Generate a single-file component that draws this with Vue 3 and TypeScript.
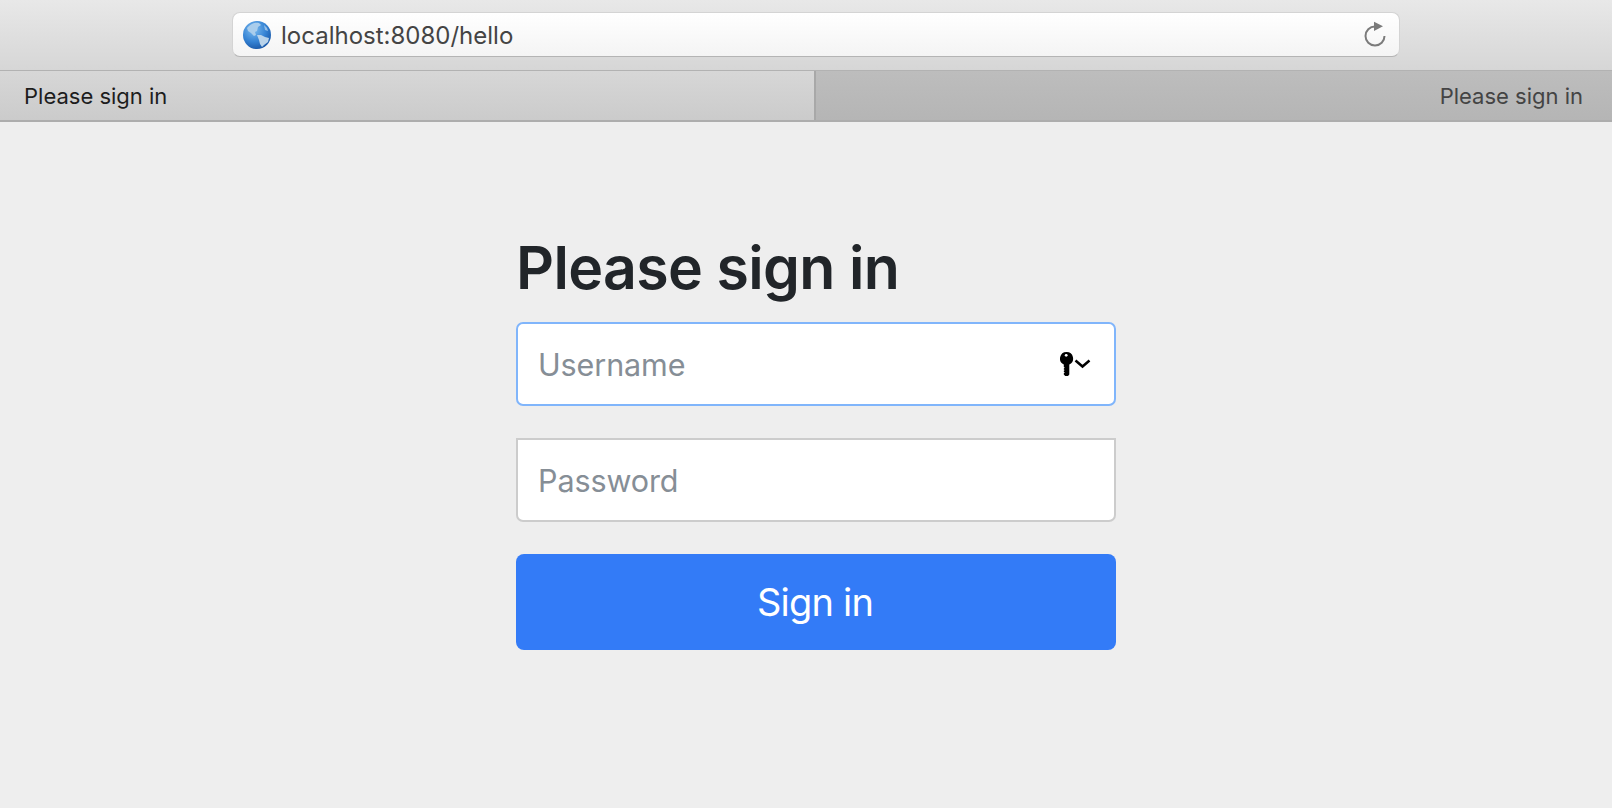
<template>
  <div class="window">
    <header class="toolbar">
      <div class="address">
        <svg class="globe" width="30" height="30" viewBox="0 0 30 30">
          <defs>
            <radialGradient id="sea" cx="0.38" cy="0.3" r="0.8">
              <stop offset="0" stop-color="#7dbcf0" />
              <stop offset="0.55" stop-color="#3583d4" />
              <stop offset="1" stop-color="#154f9e" />
            </radialGradient>
          </defs>
          <circle cx="15" cy="15" r="14" fill="url(#sea)" />
          <path d="M7 6c3-3 7-4 10-3l2 2-3 2-1 4-2 1 1 3-2 1-3-3-3-2-1-3z" fill="#a9cdec" />
          <path d="M15 15l4 0 4 2 4 1-1 4-4 3-2 2-2-3-1-4z" fill="#b9d3ea" />
          <path d="M22 5l3 3 1 3-3-1z" fill="#94bfe8" />
        </svg>
        <span class="url">localhost:8080/hello</span>
        <svg class="reload" width="26" height="28" viewBox="0 0 26 28">
          <path d="M13 5.500a9.500 9.500 0 1 0 9.500 9.500" fill="none" stroke="#7b7b7b" stroke-width="2" />
          <path d="M12 .7l9 4.600-9 4.700z" fill="#7b7b7b" />
        </svg>
      </div>
    </header>
    <nav class="tabs">
      <div class="tab tab-active">{{ title }}</div>
      <div class="tab tab-idle">{{ title }}</div>
    </nav>
    <main class="page">
      <form class="signin" @submit.prevent>
        <h2 class="heading">{{ title }}</h2>
        <div class="field field-focus">
          <input class="control" type="text" placeholder="Username" />
          <svg class="keychain" width="32" height="26" viewBox="0 0 32 26">
            <path d="M6.500 1a6.500 6.500 0 0 1 2.800 12.400V23.500L8 25H5.200l-1.400-1.500v-1.300l1-.7-1-.7v-1l1-.7-1-.7v-1l1-.7-1-.7v-2.600A6.500 6.500 0 0 1 6.500 1z" fill="#000" />
            <circle cx="6.200" cy="4.300" r="1.400" fill="#fff" />
            <path d="M15.500 9.500l7 6 7-6" fill="none" stroke="#000" stroke-width="2.500" />
          </svg>
        </div>
        <div class="field field-stacked">
          <input class="control" type="password" placeholder="Password" />
        </div>
        <button class="submit" type="submit">Sign in</button>
      </form>
    </main>
  </div>
</template>

<script setup lang="ts">
const title = 'Please sign in'
</script>

<style>
html,
body {
  margin: 0;
  background: #eeeeee;
}
</style>

<style scoped>
.window {
  height: 808px;
  display: flex;
  flex-direction: column;
  overflow: hidden;
  font-family: Inter, 'Liberation Sans', sans-serif;
}
.toolbar {
  height: 71px;
  box-sizing: border-box;
  padding: 12px 212px 0 232px;
  background: linear-gradient(#e8e8e8, #d6d6d6);
  border-bottom: 1px solid #b2b2b2;
}
.address {
  height: 45px;
  box-sizing: border-box;
  display: flex;
  align-items: center;
  padding: 0 11px 0 10px;
  background: linear-gradient(#ffffff, #f4f4f4);
  border: 1px solid #d4d4d4;
  border-bottom-color: #b4b4b4;
  border-radius: 8px;
}
.globe {
  flex: none;
  margin-left: -1px;
}
.url {
  margin-left: 9px;
  padding-top: 1px;
  font-size: 24px;
  color: #444444;
}
.reload {
  flex: none;
  margin-left: auto;
}
.tabs {
  height: 51px;
  display: grid;
  grid-template-columns: 814px 1fr;
  box-sizing: border-box;
  border-bottom: 2px solid #adadad;
  font-size: 22px;
}
.tab {
  display: flex;
  align-items: center;
  padding: 1px 29px 0 24px;
}
.tab-active {
  background: linear-gradient(#d7d7d7, #cbcbcb);
  color: #1d1d1d;
}
.tab-idle {
  justify-content: flex-end;
  background: linear-gradient(#bdbdbd, #b5b5b5);
  border-left: 2px solid #a8a8a8;
  color: #444444;
}
.page {
  flex: 1;
  background: #eeeeee;
}
.signin {
  width: 600px;
  margin-left: 516px;
  padding-top: 112px;
}
.heading {
  margin: 0 0 21px;
  font-size: 59px;
  line-height: 67px;
  font-weight: 600;
  letter-spacing: -0.65px;
  color: #212529;
}
.field {
  height: 83.500px;
  box-sizing: border-box;
  display: flex;
  align-items: center;
  margin-bottom: 32px;
  padding: 0 22px 0 20px;
  background: #ffffff;
  border: 2px solid #cccccc;
  border-radius: 7px;
}
.field-focus {
  border-color: #80b5fb;
}
.field-stacked {
  height: 84.500px;
  border-top-left-radius: 0;
  border-top-right-radius: 0;
}
.control {
  flex: 1;
  min-width: 0;
  padding: 2px 0 0;
  border: 0;
  outline: 0;
  background: transparent;
  font-family: inherit;
  font-size: 30.500px;
  letter-spacing: -0.1px;
  color: #495057;
}
.control::placeholder {
  color: #868e96;
  opacity: 1;
}
.keychain {
  flex: none;
}
.submit {
  display: block;
  width: 100%;
  height: 96px;
  padding: 0 2px 0 0;
  border: 0;
  border-radius: 8px;
  background: #337bf7;
  color: #ffffff;
  font-family: inherit;
  font-size: 38px;
  letter-spacing: -0.8px;
}
</style>
